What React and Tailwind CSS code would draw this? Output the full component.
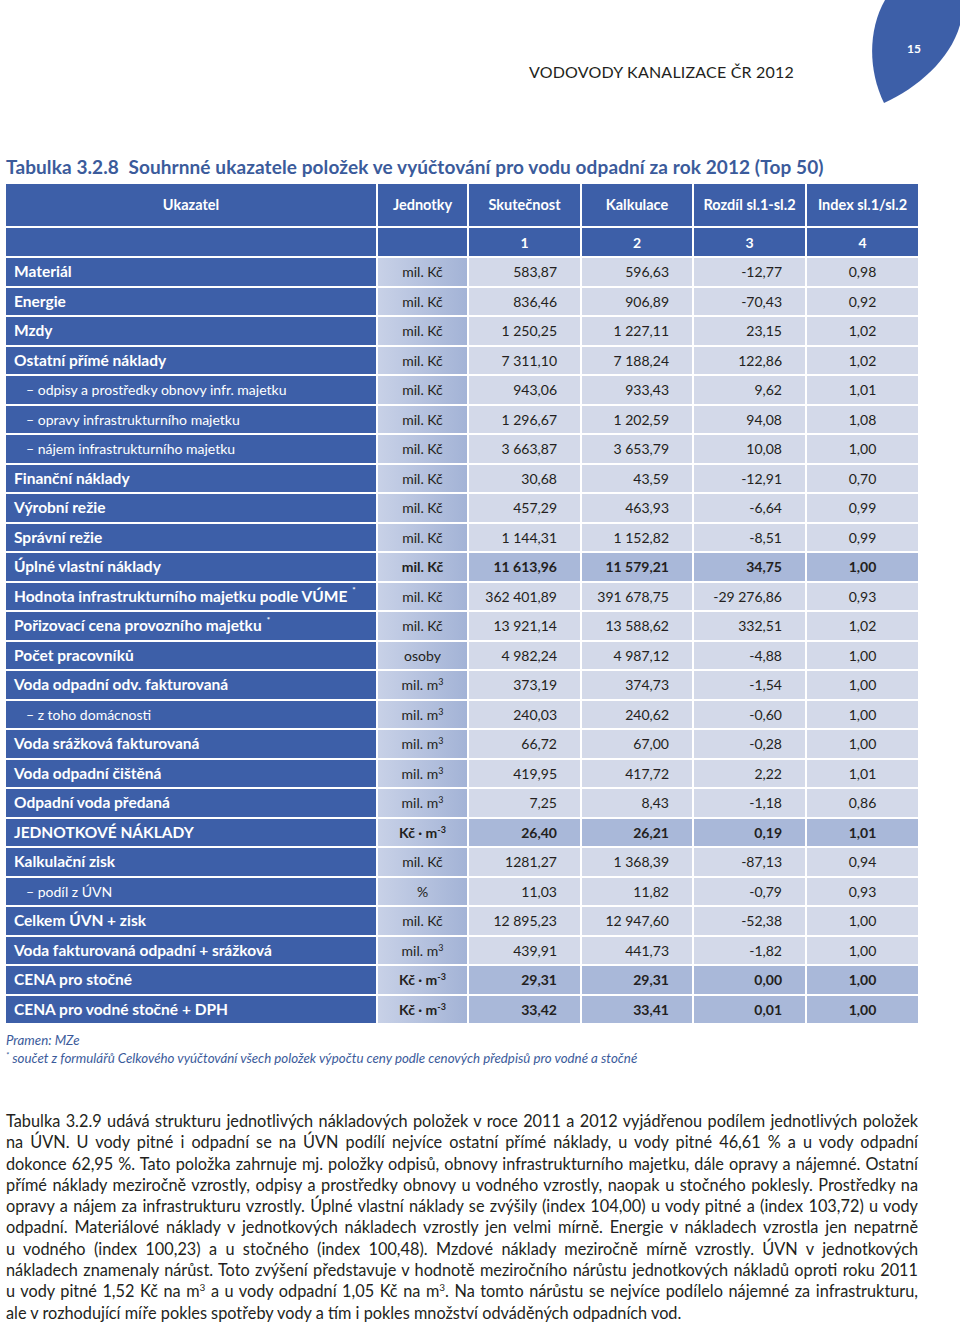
const ROWS = [
  { label: "Materiál", unit: "mil. Kč", v: ["583,87", "596,63", "-12,77", "0,98"] },
  { label: "Energie", unit: "mil. Kč", v: ["836,46", "906,89", "-70,43", "0,92"] },
  { label: "Mzdy", unit: "mil. Kč", v: ["1 250,25", "1 227,11", "23,15", "1,02"] },
  { label: "Ostatní přímé náklady", unit: "mil. Kč", v: ["7 311,10", "7 188,24", "122,86", "1,02"] },
  { label: "– odpisy a prostředky obnovy infr. majetku", sub: true, unit: "mil. Kč", v: ["943,06", "933,43", "9,62", "1,01"] },
  { label: "– opravy infrastrukturního majetku", sub: true, unit: "mil. Kč", v: ["1 296,67", "1 202,59", "94,08", "1,08"] },
  { label: "– nájem infrastrukturního majetku", sub: true, unit: "mil. Kč", v: ["3 663,87", "3 653,79", "10,08", "1,00"] },
  { label: "Finanční náklady", unit: "mil. Kč", v: ["30,68", "43,59", "-12,91", "0,70"] },
  { label: "Výrobní režie", unit: "mil. Kč", v: ["457,29", "463,93", "-6,64", "0,99"] },
  { label: "Správní režie", unit: "mil. Kč", v: ["1 144,31", "1 152,82", "-8,51", "0,99"] },
  { label: "Úplné vlastní náklady", unit: "mil. Kč", bold: true, v: ["11 613,96", "11 579,21", "34,75", "1,00"] },
  { label: "Hodnota infrastrukturního majetku podle VÚME", star: true, unit: "mil. Kč", v: ["362 401,89", "391 678,75", "-29 276,86", "0,93"] },
  { label: "Pořizovací cena provozního majetku", star: true, unit: "mil. Kč", v: ["13 921,14", "13 588,62", "332,51", "1,02"] },
  { label: "Počet pracovníků", unit: "osoby", v: ["4 982,24", "4 987,12", "-4,88", "1,00"] },
  { label: "Voda odpadní odv. fakturovaná", unit: "m3", v: ["373,19", "374,73", "-1,54", "1,00"] },
  { label: "– z toho domácnosti", sub: true, unit: "m3", v: ["240,03", "240,62", "-0,60", "1,00"] },
  { label: "Voda srážková fakturovaná", unit: "m3", v: ["66,72", "67,00", "-0,28", "1,00"] },
  { label: "Voda odpadní čištěná", unit: "m3", v: ["419,95", "417,72", "2,22", "1,01"] },
  { label: "Odpadní voda předaná", unit: "m3", v: ["7,25", "8,43", "-1,18", "0,86"] },
  { label: "JEDNOTKOVÉ NÁKLADY", unit: "kc", bold: true, v: ["26,40", "26,21", "0,19", "1,01"] },
  { label: "Kalkulační zisk", unit: "mil. Kč", v: ["1281,27", "1 368,39", "-87,13", "0,94"] },
  { label: "– podíl z ÚVN", sub: true, unit: "%", v: ["11,03", "11,82", "-0,79", "0,93"] },
  { label: "Celkem ÚVN + zisk", unit: "mil. Kč", v: ["12 895,23", "12 947,60", "-52,38", "1,00"] },
  { label: "Voda fakturovaná odpadní + srážková", unit: "m3", v: ["439,91", "441,73", "-1,82", "1,00"] },
  { label: "CENA pro stočné", unit: "kc", bold: true, v: ["29,31", "29,31", "0,00", "1,00"] },
  { label: "CENA pro vodné stočné + DPH", unit: "kc", bold: true, v: ["33,42", "33,41", "0,01", "1,00"] },
];

const PARA = [
  "Tabulka 3.2.9 udává strukturu jednotlivých nákladových položek v roce 2011 a 2012 vyjádřenou podílem jednotlivých položek",
  "na ÚVN. U vody pitné i odpadní se na ÚVN podílí nejvíce ostatní přímé náklady, u vody pitné 46,61 % a u vody odpadní",
  "dokonce 62,95 %. Tato položka zahrnuje mj. položky odpisů, obnovy infrastrukturního majetku, dále opravy a nájemné. Ostatní",
  "přímé náklady meziročně vzrostly, odpisy a prostředky obnovy u vodného vzrostly, naopak u stočného poklesly. Prostředky na",
  "opravy a nájem za infrastrukturu vzrostly. Úplné vlastní náklady se zvýšily (index 104,00) u vody pitné a (index 103,72) u vody",
  "odpadní. Materiálové náklady v jednotkových nákladech vzrostly jen velmi mírně. Energie v nákladech vzrostla jen nepatrně",
  "u vodného (index 100,23) a u stočného (index 100,48). Mzdové náklady meziročně mírně vzrostly. ÚVN v jednotkových",
  "nákladech znamenaly nárůst. Toto zvýšení představuje v hodnotě meziročního nárůstu jednotkových nákladů oproti roku 2011",
];

function Unit({ unit }) {
  if (unit === "m3") {
    return (
      <span>
        mil. m<sup className="text-[9px] -top-[5px]">3</sup>
      </span>
    );
  }
  if (unit === "kc") {
    return (
      <span>
        Kč · m<sup className="text-[9px] -top-[5px]">-3</sup>
      </span>
    );
  }
  return <span>{unit}</span>;
}

export default function App() {
  const dark = "bg-[#3d5fa8]";
  return (
    <div className="w-[960px] h-[1322px] bg-white text-[#231f20] font-['Lato','Liberation_Sans',sans-serif] overflow-hidden">
      {/* page header */}
      <div className="h-[104px] flex justify-end items-start">
        <div className="mt-[62px] text-[16px] tracking-[0.2px] leading-[20px]">VODOVODY KANALIZACE ČR 2012</div>
        <div className="relative ml-[78px] w-[88px] h-[104px]">
          <svg width="88" height="104" viewBox="0 0 88 104" className="block">
            <path d="M13 0 C-4 30 -4 70 12 103 C45 88 78 60 88 25 L88 0 Z" fill="#3d5fa8" />
          </svg>
          <span className="absolute left-[35px] top-[40px] text-white font-bold text-[12px]">15</span>
        </div>
      </div>

      <div className="px-[6px]">
        {/* title */}
        <h2 className="mt-[51px] text-[19px] leading-[24px] font-bold text-[#3b5b9b] tracking-[0.1px]">
          Tabulka 3.2.8&nbsp; Souhrnné ukazatele položek ve vyúčtování pro vodu odpadní za rok 2012 (Top 50)
        </h2>

        {/* table */}
        <div className="mt-[5px] grid grid-cols-[370px_89px_111px_110px_111px_111px] grid-rows-[42px_28px] auto-rows-[27.5px] gap-[2px] text-[14px]">
          {["Ukazatel", "Jednotky", "Skutečnost", "Kalkulace", "Rozdíl sl.1-sl.2", "Index sl.1/sl.2"].map((h) => (
            <div key={h} className={`${dark} flex items-center justify-center text-white font-bold text-[14.5px]`}>
              {h}
            </div>
          ))}
          <div className={dark} />
          <div className={dark} />
          {["1", "2", "3", "4"].map((n) => (
            <div key={n} className={`${dark} flex items-center justify-center text-white font-bold`}>
              {n}
            </div>
          ))}

          {ROWS.map((r) => {
            const num = r.bold ? "bg-[#a9b8d9] font-bold" : "bg-[#d3d9e9]";
            return [
              <div
                key={r.label + "l"}
                className={`${dark} flex items-center text-white whitespace-nowrap ${r.sub ? "pl-[20px] font-normal text-[14px]" : "pl-[8px] font-bold text-[15.5px]"}`}
              >
                {r.label}
                {r.star && <sup className="text-[8px] ml-[5px] -top-[6px]">*</sup>}
              </div>,
              <div
                key={r.label + "u"}
                className={`bg-gradient-to-r from-[#c8d1e7] to-[#a3b3d6] flex items-center justify-center ${r.bold ? "font-bold" : ""}`}
              >
                <Unit unit={r.unit} />
              </div>,
              ...r.v.map((val, i) => (
                <div
                  key={r.label + i}
                  className={`${num} flex items-center ${i === 3 ? "justify-center" : "justify-end pr-[23px]"}`}
                >
                  {val}
                </div>
              )),
            ];
          })}
        </div>

        {/* source */}
        <div className="mt-[8px] text-[13.3px] leading-[18px] italic text-[#3b5b9b]">
          <div>Pramen: MZe</div>
          <div>
            <sup className="text-[8px] -top-[5px]">*</sup> součet z formulářů Celkového vyúčtování všech položek výpočtu ceny podle cenových předpisů pro vodné a stočné
          </div>
        </div>

        {/* paragraph */}
        <div className="mt-[43px] w-[912px] text-[16.3px] leading-[21.3px]">
          {PARA.map((line) => (
            <div key={line} className="text-justify [text-align-last:justify] whitespace-nowrap">
              {line}
            </div>
          ))}
          <div className="text-justify [text-align-last:justify] whitespace-nowrap">
            u vody pitné 1,52 Kč na m<sup className="text-[10px] -top-[6px]">3</sup> a u vody odpadní 1,05 Kč na m
            <sup className="text-[10px] -top-[6px]">3</sup>. Na tomto nárůstu se nejvíce podílelo nájemné za infrastrukturu,
          </div>
          <div>ale v rozhodující míře pokles spotřeby vody a tím i pokles množství odváděných odpadních vod.</div>
        </div>
      </div>
    </div>
  );
}
